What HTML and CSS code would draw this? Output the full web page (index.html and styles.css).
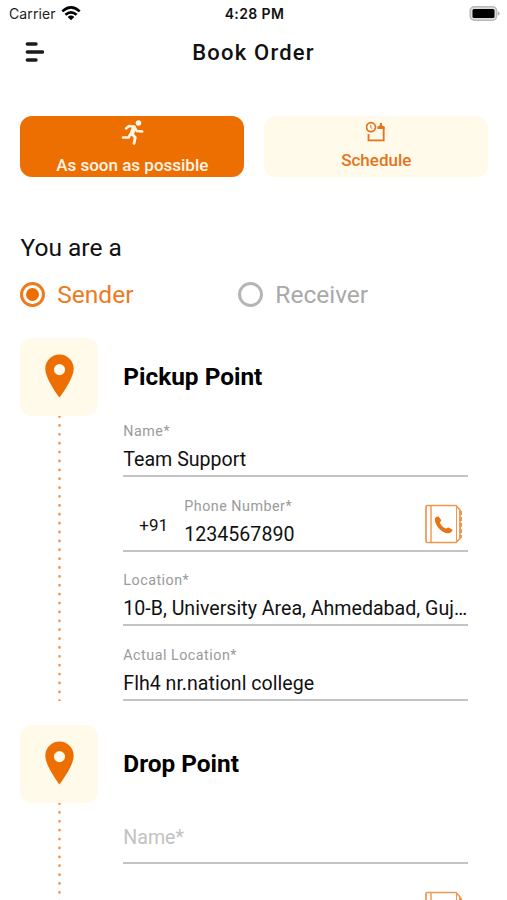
FILE: index.html
```html
<!DOCTYPE html>
<html lang="en">
<head>
<meta charset="utf-8">
<title>Book Order</title>
<link rel="stylesheet" href="styles.css">
</head>
<body>
<svg class="defs" width="0" height="0" aria-hidden="true">
  <symbol id="pin" viewBox="0 0 29 44">
    <path fill-rule="evenodd" d="M14.500 .5C6.600 .5 .3 6.800 .3 14.700C.3 25 14.500 43.500 14.500 43.500S28.700 25 28.700 14.700C28.700 6.800 22.400 .5 14.500 .5ZM14.500 10a5.600 5.600 0 1 1 0 11.200 5.600 5.600 0 0 1 0-11.200Z"/>
  </symbol>
  <symbol id="contacts" viewBox="0 0 38 40">
    <g fill="none" stroke-width="1.700">
      <path d="M2.500 1.500H31L35 6V34.500L31 38.500H2.500Q1 38.500 1 37V3Q1 1.500 2.500 1.500Z"/>
      <path d="M6 1.500V38.500" stroke-width="1.400"/>
      <path d="M31.500 3V37" stroke-width="1"/>
      <path d="M35.500 7V34" stroke-width="3" stroke-dasharray="4 2"/>
    </g>
    <path stroke="none" d="M9.800 14.800C10.800 13 12.300 12.200 13.800 12.700L16.300 16.200C16.300 17 15 17.800 14.800 18.700C16 21.300 18 23.300 20.600 24.600C21.800 24.500 22.500 23.300 23.500 23.500L27.500 25.800C27.500 27.400 25.600 29 23.600 29.300C17.200 29.600 9.500 21.500 9.800 14.800Z"/>
  </symbol>
</svg>

<div class="status">
  <div class="carrier">Carrier
    <svg width="20" height="15" viewBox="0 0 20 15">
      <g fill="none" stroke="#000" stroke-width="2.600">
        <path d="M1.300 5.400Q10-2.600 18.700 5.400"/>
        <path d="M4.400 8.800Q10 3.800 15.600 8.800"/>
      </g>
      <path d="M6.700 11Q10 8.200 13.300 11L10 14.300Z"/>
    </svg>
  </div>
  <div class="clock">4:28 PM</div>
  <div class="power">
    <svg width="31" height="15" viewBox="0 0 31 15">
      <rect x="1.200" y=".8" width="26.400" height="13.400" rx="4" fill="#ddd" stroke="#b9b9b9" stroke-width="1.500"/>
      <rect x="3.500" y="3" width="22" height="9" rx="1.500"/>
      <path d="M28.800 5.300Q30.700 6 30.700 7.500T28.800 9.700Z" fill="#aaa"/>
    </svg>
  </div>
</div>

<header class="header">
  <svg width="20" height="22" viewBox="0 0 20 22">
    <path d="M3.300 3H12M3.300 11H18.500M3.300 19H12" stroke="#1b1b1b" stroke-width="3.400" stroke-linecap="round"/>
  </svg>
  <h1>Book Order</h1>
</header>

<div class="tabs">
  <div class="tab tab-active">
    <svg width="24" height="26" viewBox="0 0 24 26">
      <circle cx="18.500" cy="3" r="2.800" fill="#fff5e6"/>
      <g fill="none" stroke="#fff5e6" stroke-linecap="round" stroke-linejoin="round">
        <path d="M6 8.500L9 6L14 6.500L16.800 11L22.300 11.500" stroke-width="2.400"/>
        <path d="M14 7.500L12 13.500" stroke-width="4.400"/>
        <path d="M12 14L15.300 17.500L14 23.500" stroke-width="2.800"/>
        <path d="M10 14.500L8.800 17.500L3 17.500" stroke-width="2.600"/>
      </g>
    </svg>
    <span>As soon as possible</span>
  </div>
  <div class="tab">
    <svg width="20" height="21" viewBox="0 0 20 21">
      <g fill="none" stroke="#e5731c" stroke-width="1.800">
        <circle cx="5" cy="6.200" r="4.500"/>
        <path d="M4.800 4V6.500L6.200 7.500" stroke-width="1"/>
        <path d="M2.500 13V19.300H17.700V6"/>
      </g>
      <path d="M11.500 8V5.500L13.800 4.500V2H16V4.500L18.600 5.500V8Z" fill="#e5731c"/>
    </svg>
    <span>Schedule</span>
  </div>
</div>

<h2 class="question">You are a</h2>
<div class="roles">
  <div class="role role-on"><i class="radio"></i>Sender</div>
  <div class="role"><i class="radio"></i>Receiver</div>
</div>

<section class="step">
  <div class="rail">
    <div class="tile"><svg width="29" height="44"><use href="#pin"/></svg></div>
    <svg class="dots" width="4" height="285"><path d="M2.500 .5V285"/></svg>
  </div>
  <div class="form">
    <h3>Pickup Point</h3>
    <div class="field"><label>Name*</label><p>Team Support</p></div>
    <div class="field phone">
      <span class="code">+91</span>
      <div class="number"><label>Phone Number*</label><p>1234567890</p></div>
      <svg class="book" width="38" height="40"><use href="#contacts"/></svg>
    </div>
    <div class="field"><label>Location*</label><p>10-B, University Area, Ahmedabad, Guj…</p></div>
    <div class="field"><label>Actual Location*</label><p>Flh4 nr.nationl college</p></div>
  </div>
</section>

<section class="step step-last">
  <div class="rail">
    <div class="tile"><svg width="29" height="44"><use href="#pin"/></svg></div>
    <svg class="dots" width="4" height="285"><path d="M2.500 .5V285"/></svg>
  </div>
  <div class="form">
    <h3>Drop Point</h3>
    <div class="field"><p class="empty">Name*</p></div>
    <div class="field phone">
      <svg class="book" width="38" height="40"><use href="#contacts"/></svg>
    </div>
  </div>
</section>
</body>
</html>
```
FILE: styles.css
```css
* { box-sizing: border-box; }
html, body { height: 900px; overflow: hidden; }
body { margin: 0; background: #fff; color: #111; font-family: Roboto, "Liberation Sans", sans-serif; }
h1, h2, h3, p { margin: 0; }
svg { display: block; flex: none; }
.defs { position: absolute; }

.status { display: grid; grid-template-columns: 1fr auto 1fr; align-items: center; height: 28px; padding: 0 7px 0 9px; font: 14px/28px Inter, sans-serif; color: #222; }
.carrier { display: flex; align-items: center; gap: 5px; letter-spacing: .1px; }
.carrier svg { margin-top: -2px; }
.clock { font-weight: 600; font-size: 14px; letter-spacing: .4px; color: #111; }
.power { display: flex; justify-content: flex-end; margin-top: -2px; }

.header { display: grid; grid-template-columns: 20px 1fr 20px; align-items: center; height: 48px; padding: 0 24px; }
.header h1 { padding-top: 1px; text-align: center; font-size: 22px; line-height: 47px; font-weight: 500; letter-spacing: 1.2px; }

.tabs { display: grid; grid-template-columns: 224px 224px; gap: 20px; margin: 40px 0 0 20.300px; }
.tab { display: flex; flex-direction: column; align-items: center; height: 61px; padding-top: 5px; border-radius: 12px; background: #fffaea; color: #e5731c; font-size: 17px; font-weight: 500; line-height: 20px; }
.tab span { margin-top: 8px; }
.tab-active { padding-top: 4px; background: #ed6f02; color: #fff5e6; }
.tab-active span { margin-top: 9px; }

.question { margin: 56px 0 0 20.500px; font-size: 24.500px; font-weight: 400; line-height: 30px; }
.roles { display: grid; grid-template-columns: 218px 1fr; margin: 16px 0 0 20.300px; }
.role { display: flex; align-items: center; gap: 12px; height: 30px; font-size: 24.500px; color: #a9a9a9; }
.radio { display: flex; align-items: center; justify-content: center; width: 25px; height: 25px; border: 3px solid #b5b5b5; border-radius: 50%; }
.role-on { color: #ed7a1c; }
.role-on .radio { border-color: #ed7a1c; }
.role-on .radio::after { content: ""; width: 13px; height: 13px; border-radius: 50%; background: #ed6f02; }

.step { display: grid; grid-template-columns: 78px 344.700px; column-gap: 25px; height: 387px; margin-left: 20.300px; }
.step-last { height: 175px; overflow: hidden; }
.roles + .step { margin-top: 29px; }
.rail { display: flex; flex-direction: column; align-items: center; }
.tile { display: flex; flex: none; align-items: center; justify-content: center; width: 78px; height: 78px; border-radius: 12px; background: #fffaea; fill: #ed6f02; }
.tile svg { margin-top: -2px; }
.dots path { fill: none; stroke: #f2934a; stroke-width: 2.700; stroke-linecap: round; stroke-dasharray: .1 8.780; }

.form h3 { height: 78px; line-height: 78px; font-size: 24.400px; font-weight: 700; color: #000; }
.field { display: flex; flex-direction: column; justify-content: flex-end; height: 74.500px; padding-bottom: 3px; border-bottom: 2px solid #c4c4c4; }
h3 + .field { height: 61px; }
.field label { font-size: 14.300px; line-height: 18px; letter-spacing: .5px; color: #9a9a9a; }
.field p { margin-top: 8px; font-size: 19.600px; line-height: 24px; white-space: nowrap; }
.phone { flex-direction: row; justify-content: flex-start; align-items: flex-end; }
.code { width: 61px; padding-left: 16px; font-size: 17px; line-height: 44px; }
.number { display: flex; flex-direction: column; }
.book { margin: 0 5px 3px auto; stroke: #f0964f; fill: #e97312; }
.field .empty { margin-bottom: 9px; color: #c2c2c2; }
```
